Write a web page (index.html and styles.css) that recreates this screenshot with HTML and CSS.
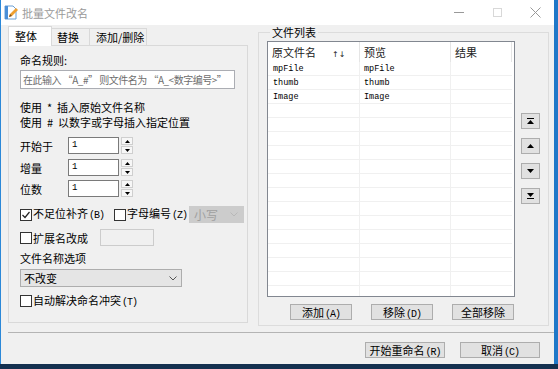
FILE: index.html
```html
<!DOCTYPE html>
<html lang="zh-CN">
<head>
    <meta charset="UTF-8"/>
    <title>批量文件改名</title>
    <link rel="stylesheet" href="styles.css">
</head>
<body>
    <div class="window">
        <div class="titlebar">
            <svg class="app-icon" width="14" height="15" viewBox="0 0 14 15">
                <path d="M1 1h8l3 3v10H1z" fill="#ffffff" stroke="#6a9fd4"/>
                <path d="M1 1h3v13H1z" fill="#4a8fd8"/>
                <path d="M5 12l1-3 6-6 2 2-6 6z" fill="#f0a030"/>
                <path d="M5 12l1-3 2 2z" fill="#7a5020"/>
            </svg>
            <span class="title">批量文件改名</span>
            <span class="ctl"><svg width="11" height="11"><rect x="0" y="5" width="10" height="1" fill="#999"/></svg></span>
            <span class="ctl"><svg width="11" height="11"><rect x="1.5" y="1.5" width="8" height="8" fill="none" stroke="#d8d8d8"/></svg></span>
            <span class="ctl"><svg width="11" height="11"><path d="M0.5 0.5l10 10M10.5 0.5l-10 10" stroke="#999" stroke-width="1"/></svg></span>
        </div>

        <div class="main">
            <div class="tabs">
                <div class="tab-strip">
                    <span class="tab active">整体</span>
                    <span class="tab t2">替换</span>
                    <span class="tab t3">添加/删除</span>
                </div>
                <div class="tab-panel">
                    <div class="label">命名规则:</div>
                    <div class="rule-input">在此输入 “A_#” 则文件名为 “A_&lt;数字编号&gt;”</div>
                    <div class="hint first">使用 &nbsp;* &nbsp;插入原始文件名称</div>
                    <div class="hint">使用 &nbsp;# &nbsp;以数字或字母插入指定位置</div>

                    <div class="spin-row r1">
                        <span class="spin-label">开始于</span>
                        <span class="num-box">1</span>
                        <span class="spinner">
                            <span class="spin-btn"><svg width="5" height="3"><path d="M0 3L2.5 0L5 3z"/></svg></span>
                            <span class="spin-btn"><svg width="5" height="3"><path d="M0 0L2.5 3L5 0z"/></svg></span>
                        </span>
                    </div>
                    <div class="spin-row r2">
                        <span class="spin-label">增量</span>
                        <span class="num-box">1</span>
                        <span class="spinner">
                            <span class="spin-btn"><svg width="5" height="3"><path d="M0 3L2.5 0L5 3z"/></svg></span>
                            <span class="spin-btn"><svg width="5" height="3"><path d="M0 0L2.5 3L5 0z"/></svg></span>
                        </span>
                    </div>
                    <div class="spin-row r3">
                        <span class="spin-label">位数</span>
                        <span class="num-box">1</span>
                        <span class="spinner">
                            <span class="spin-btn"><svg width="5" height="3"><path d="M0 3L2.5 0L5 3z"/></svg></span>
                            <span class="spin-btn"><svg width="5" height="3"><path d="M0 0L2.5 3L5 0z"/></svg></span>
                        </span>
                    </div>

                    <div class="check-row pad-row">
                        <span class="box"><svg width="10" height="10"><path d="M1.5 5l2.5 2.5L8.5 2" fill="none" stroke="#222" stroke-width="1.2"/></svg></span>
                        <span class="check-text">不足位补齐<span class="key">(B)</span></span>
                        <span class="box second"></span>
                        <span class="check-text">字母编号<span class="key">(Z)</span></span>
                        <span class="combo disabled">小写<svg width="8" height="5"><path d="M0.5 0.5l3.5 3.5l3.5-3.5" fill="none" stroke="#b8b8b8"/></svg></span>
                    </div>
                    <div class="check-row ext-row">
                        <span class="box"></span>
                        <span class="check-text">扩展名改成</span>
                        <span class="ext-box"></span>
                    </div>

                    <div class="label opt-label">文件名称选项</div>
                    <div class="combo name-combo">不改变<svg width="8" height="5"><path d="M0.5 0.5l3.5 3.5l3.5-3.5" fill="none" stroke="#555"/></svg></div>
                    <div class="check-row auto-row">
                        <span class="box"></span>
                        <span class="check-text">自动解决命名冲突<span class="key">(T)</span></span>
                    </div>
                </div>
            </div>

            <fieldset class="files">
                <legend>文件列表</legend>
                <div class="list-row">
                    <div class="list">
                        <div class="list-head">
                            <span class="col c1">原文件名<span class="sort">↑↓</span></span>
                            <span class="col c2">预览</span>
                            <span class="col c3">结果</span>
                        </div>
                        <div class="list-item"><span class="cell c1">mpFile</span><span class="cell c2">mpFile</span><span class="cell c3"></span></div>
                        <div class="list-item"><span class="cell c1">thumb</span><span class="cell c2">thumb</span><span class="cell c3"></span></div>
                        <div class="list-item"><span class="cell c1">Image</span><span class="cell c2">Image</span><span class="cell c3"></span></div>
                        <div class="list-item"><span class="cell c1"></span><span class="cell c2"></span><span class="cell c3"></span></div>
                        <div class="list-item"><span class="cell c1"></span><span class="cell c2"></span><span class="cell c3"></span></div>
                        <div class="list-item"><span class="cell c1"></span><span class="cell c2"></span><span class="cell c3"></span></div>
                        <div class="list-item"><span class="cell c1"></span><span class="cell c2"></span><span class="cell c3"></span></div>
                        <div class="list-item"><span class="cell c1"></span><span class="cell c2"></span><span class="cell c3"></span></div>
                        <div class="list-item"><span class="cell c1"></span><span class="cell c2"></span><span class="cell c3"></span></div>
                        <div class="list-item"><span class="cell c1"></span><span class="cell c2"></span><span class="cell c3"></span></div>
                        <div class="list-item"><span class="cell c1"></span><span class="cell c2"></span><span class="cell c3"></span></div>
                        <div class="list-item"><span class="cell c1"></span><span class="cell c2"></span><span class="cell c3"></span></div>
                        <div class="list-item"><span class="cell c1"></span><span class="cell c2"></span><span class="cell c3"></span></div>
                        <div class="list-item"><span class="cell c1"></span><span class="cell c2"></span><span class="cell c3"></span></div>
                        <div class="list-item"><span class="cell c1"></span><span class="cell c2"></span><span class="cell c3"></span></div>
                        <div class="list-item"><span class="cell c1"></span><span class="cell c2"></span><span class="cell c3"></span></div>
                        <div class="list-item"><span class="cell c1"></span><span class="cell c2"></span><span class="cell c3"></span></div>
                    </div>
                    <div class="side-buttons">
                        <span class="side-btn"><svg width="7" height="6"><rect x="0" y="0" width="7" height="1"/><path d="M0 6L3.5 2L7 6z"/></svg></span>
                        <span class="side-btn"><svg width="7" height="4"><path d="M0 4L3.5 0L7 4z"/></svg></span>
                        <span class="side-btn"><svg width="7" height="4"><path d="M0 0L3.5 4L7 0z"/></svg></span>
                        <span class="side-btn"><svg width="7" height="6"><path d="M0 0L3.5 4L7 0z"/><rect x="0" y="5" width="7" height="1"/></svg></span>
                    </div>
                </div>
                <div class="list-buttons">
                    <button class="btn">添加<span class="key">(A)</span></button>
                    <button class="btn">移除<span class="key">(D)</span></button>
                    <button class="btn">全部移除</button>
                </div>
            </fieldset>
        </div>

        <div class="divider"></div>

        <div class="footer">
            <button class="btn wide">开始重命名<span class="key">(R)</span></button>
            <button class="btn wide">取消<span class="key">(C)</span></button>
        </div>
    </div>
</body>
</html>
```

FILE: styles.css
```css
* {
    margin: 0;
    padding: 0;
    box-sizing: border-box;
}
body {
    width: 558px;
    height: 369px;
    overflow: hidden;
    background: linear-gradient(to bottom, #1f78c8 0, #1f78c8 364px, #14304f 364px);
    font-family: "Noto Sans CJK SC", "Liberation Sans", sans-serif;
    font-size: 11px;
    color: #000000;
}
.window {
    width: 554px;
    height: 364px;
    background-color: #f0f0f0;
    border-left: 1px solid #2b88d8;
    display: flex;
    flex-direction: column;
}
.titlebar {
    height: 25px;
    background-color: #ffffff;
    display: flex;
    align-items: center;
    padding-left: 3px;
}
.app-icon {
    flex: none;
}
.title {
    flex: 1;
    margin-left: 4px;
    color: #9a9a9a;
    font-size: 11px;
    line-height: 14px;
}
.ctl {
    width: 38px;
    height: 25px;
    display: flex;
    align-items: center;
    justify-content: center;
}
.key {
    font-family: "Liberation Mono", monospace;
    font-size: 10px;
    letter-spacing: -1px;
    margin-left: 1px;
}

.main {
    display: flex;
    padding: 1px 0 0 7px;
}
.tabs {
    width: 240px;
}
.tab-strip {
    height: 19px;
    display: flex;
    align-items: flex-end;
}
.tab {
    height: 17px;
    border: 1px solid #d9d9d9;
    border-bottom: none;
    line-height: 16px;
    padding-left: 5px;
    width: 38px;
}
.tab.active {
    height: 20px;
    width: 44px;
    margin-bottom: -1px;
    padding-left: 6px;
    line-height: 18px;
    background-color: #ffffff;
    position: relative;
    z-index: 1;
}
.tab.t2 {
    border-left: none;
}
.tab.t3 {
    width: 57px;
    padding-left: 6px;
    border-left: none;
}
.tab-panel {
    height: 278px;
    border: 1px solid #d9d9d9;
    padding: 7px 0 0 11px;
}
.label {
    line-height: 14px;
}
.rule-input {
    margin-top: 3px;
    width: 215px;
    height: 19px;
    border: 1px solid #abadb3;
    background-color: #ffffff;
    color: #6d6d6d;
    line-height: 17px;
    padding-left: 2px;
    font-size: 10px;
    letter-spacing: -0.5px;
    white-space: nowrap;
    overflow: hidden;
}
.hint {
    line-height: 15px;
}
.hint.first {
    margin-top: 11px;
}
.spin-row {
    display: flex;
    align-items: center;
    height: 17px;
}
.spin-row.r1 {
    margin-top: 7px;
}
.spin-row.r2 {
    margin-top: 5px;
}
.spin-row.r3 {
    margin-top: 4px;
}
.spin-label {
    width: 48px;
}
.num-box {
    width: 51px;
    height: 17px;
    border: 1px solid #7a7a7a;
    background-color: #ffffff;
    font-family: "Liberation Mono", monospace;
    font-size: 9px;
    line-height: 15px;
    padding-left: 3px;
}
.spinner {
    margin-left: 2px;
    width: 12px;
    height: 17px;
    display: flex;
    flex-direction: column;
    gap: 1px;
}
.spin-btn {
    flex: 1;
    border: 1px solid #cfcfcf;
    background-color: #f7f7f7;
    display: flex;
    align-items: center;
    justify-content: center;
}
.check-row {
    display: flex;
    align-items: center;
}
.pad-row {
    margin-top: 9px;
    height: 17px;
}
.ext-row {
    margin-top: 6px;
    height: 17px;
}
.auto-row {
    margin-top: 7px;
    height: 14px;
}
.box {
    width: 12px;
    height: 12px;
    border: 1px solid #333333;
    background-color: #ffffff;
    display: flex;
    align-items: center;
    justify-content: center;
    flex: none;
}
.box.second {
    margin-left: 10px;
}
.check-text {
    margin-left: 1px;
    line-height: 14px;
    white-space: nowrap;
}
.combo {
    display: flex;
    align-items: center;
    justify-content: space-between;
    border: 1px solid #adadad;
    background-color: #e5e5e5;
}
.combo.disabled {
    margin-left: auto;
    margin-right: 3px;
    width: 55px;
    height: 17px;
    border-color: #cccccc;
    background-color: #cccccc;
    color: #a0a0a0;
    padding: 0 5px 0 4px;
    font-size: 12px;
}
.ext-box {
    margin-left: 12px;
    width: 54px;
    height: 17px;
    border: 1px solid #cccccc;
    background-color: #f0f0f0;
}
.opt-label {
    margin-top: 5px;
}
.name-combo {
    margin-top: 4px;
    width: 162px;
    height: 18px;
    padding: 0 4px 0 3px;
    line-height: 16px;
}

.files {
    margin-left: 10px;
    width: 291px;
    height: 300px;
    border: 1px solid #dcdcdc;
    padding: 3px 8px 0 8px;
}
.files legend {
    margin-left: 3px;
    padding: 0 2px;
    line-height: 12px;
}
.list-row {
    display: flex;
}
.list {
    width: 248px;
    height: 256px;
    border: 1px solid #828790;
    background-color: #ffffff;
    overflow: hidden;
}
.list-head {
    height: 20px;
    display: flex;
}
.col {
    height: 20px;
    line-height: 20px;
    border-right: 1px solid #e5e5e5;
    padding-left: 4px;
    color: #222222;
    white-space: nowrap;
}
.c1 {
    width: 92px;
}
.c2 {
    width: 91px;
}
.c3 {
    width: 61px;
}
.sort {
    margin-left: 16px;
    font-family: "DejaVu Sans", sans-serif;
    font-size: 8px;
}
.list-item {
    height: 14px;
    display: flex;
}
.cell {
    height: 14px;
    border-right: 1px solid #f0f0f0;
    border-bottom: 1px solid #f0f0f0;
    font-family: "Liberation Mono", monospace;
    font-size: 8.5px;
    line-height: 15px;
    padding-left: 4px;
    overflow: hidden;
}
.cell.c1 {
    padding-left: 5px;
}
.cell.c3 {
    border-right: none;
}
.side-buttons {
    margin-left: 6px;
    padding-top: 72px;
    display: flex;
    flex-direction: column;
    gap: 9px;
}
.side-btn {
    width: 19px;
    height: 16px;
    border: 1px solid #adadad;
    background-color: #e1e1e1;
    display: flex;
    align-items: center;
    justify-content: center;
}
.list-buttons {
    margin-top: 7px;
    padding-left: 23px;
    display: flex;
    gap: 19px;
}
.btn {
    width: 62px;
    height: 16px;
    border: 1px solid #adadad;
    background-color: #e1e1e1;
    font-family: "Noto Sans CJK SC", "Liberation Sans", sans-serif;
    font-size: 11px;
    line-height: 14px;
    color: #000000;
}
.divider {
    margin: 6px 0 0 7px;
    height: 1px;
    background-color: #b4b4b4;
}
.footer {
    margin-top: 9px;
    display: flex;
    justify-content: flex-end;
    gap: 15px;
    padding-right: 14px;
}
.btn.wide {
    width: 80px;
}
```
